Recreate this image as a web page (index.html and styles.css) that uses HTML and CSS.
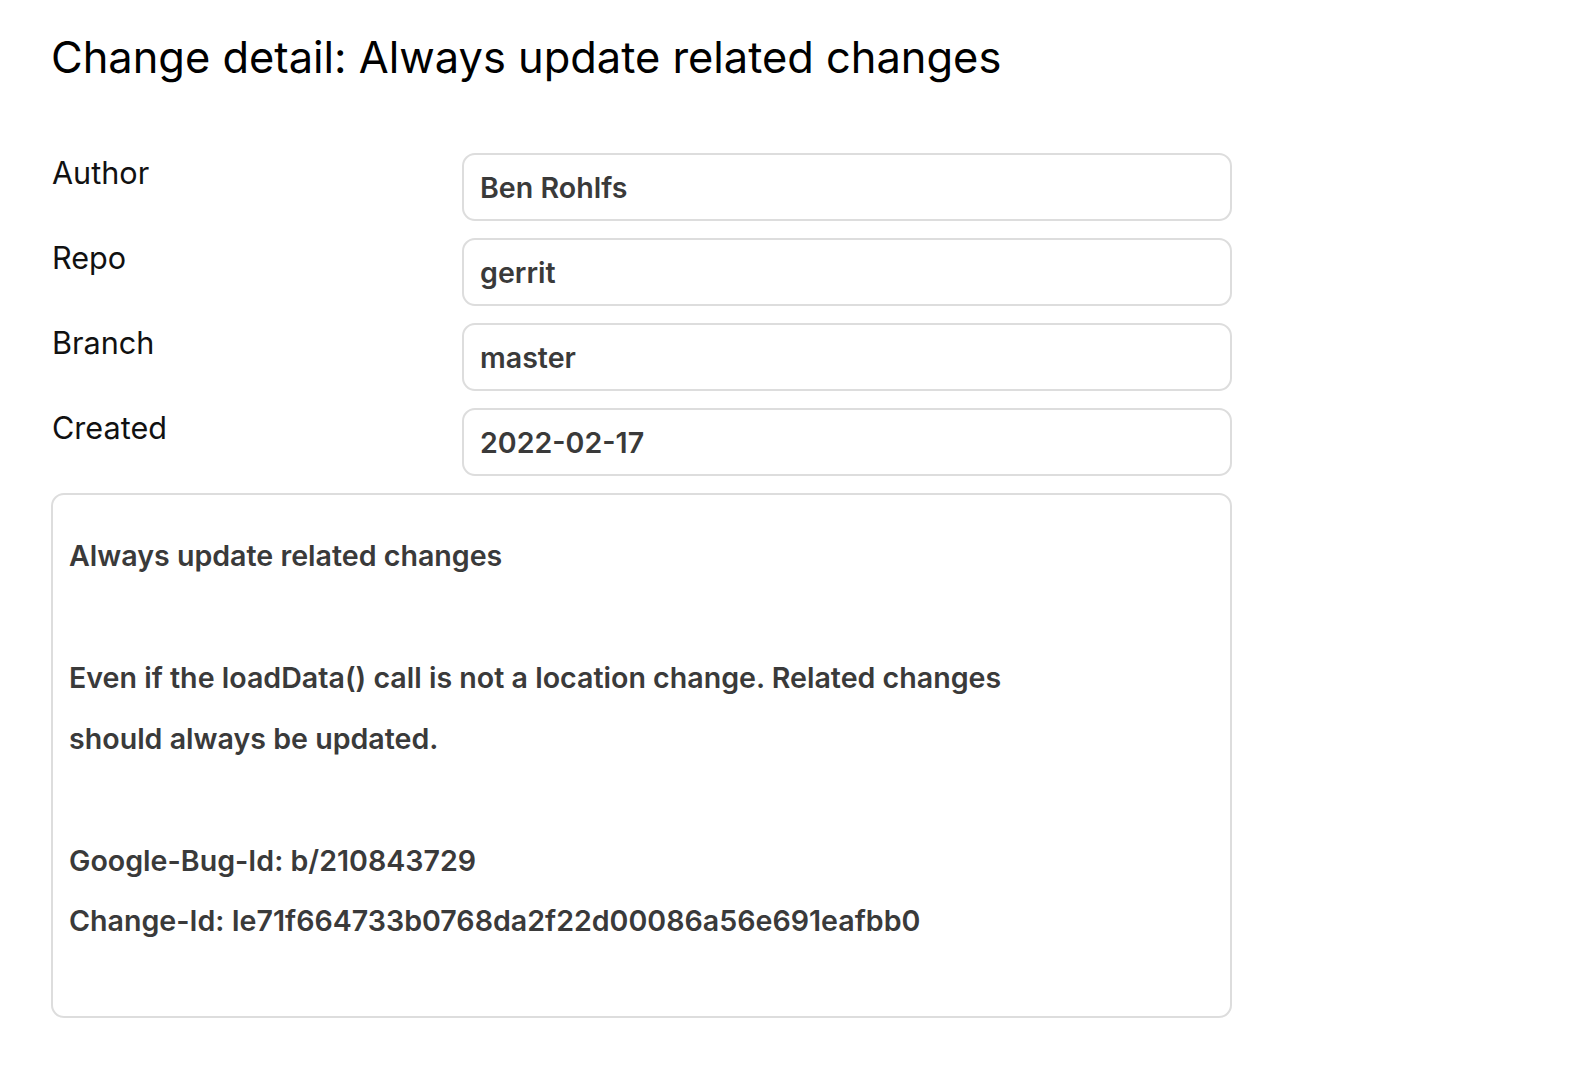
FILE: index.html
```html
<!DOCTYPE html>
<html lang="en">
<head>
<meta charset="utf-8">
<title>Change detail</title>
<link rel="stylesheet" href="styles.css">
</head>
<body>
<main class="page">
  <h1 class="title">Change detail: Always update related changes</h1>
  <div class="form">
    <div class="label">Author</div>
    <div class="field">Ben Rohlfs</div>
    <div class="label">Repo</div>
    <div class="field">gerrit</div>
    <div class="label">Branch</div>
    <div class="field">master</div>
    <div class="label">Created</div>
    <div class="field">2022-02-17</div>
    <div class="message">Always update related changes

Even if the loadData() call is not a location change. Related changes
should always be updated.

Google-Bug-Id: b/210843729
Change-Id: Ie71f664733b0768da2f22d00086a56e691eafbb0</div>
  </div>
</main>
</body>
</html>
```

FILE: styles.css
```css
html, body {
  margin: 0;
  padding: 0;
  background: #ffffff;
}

.page {
  padding: 0 51px;
  font-family: Inter, "Noto Sans", sans-serif;
}

.title {
  margin: 0;
  padding-top: 31px;
  font-size: 43.4px;
  line-height: 52px;
  font-weight: 400;
  color: #000000;
}

.form {
  margin-top: 70px;
  display: grid;
  grid-template-columns: 411px 770px;
  row-gap: 17px;
  width: 1181px;
}

.label {
  padding-top: 2px;
  padding-left: 1px;
  font-size: 30.6px;
  line-height: 35px;
  color: #111111;
}

.field {
  box-sizing: border-box;
  height: 68px;
  border: 2px solid #dddddd;
  border-radius: 13px;
  padding: 0 16px;
  display: flex;
  align-items: center;
  font-size: 28.6px;
  font-weight: 600;
  color: #3a3a3a;
}

.message {
  grid-column: 1 / -1;
  box-sizing: border-box;
  border: 2px solid #dddddd;
  border-radius: 13px;
  padding: 31px 16px 64px;
  white-space: pre-wrap;
  font-size: 28.6px;
  line-height: 60.9px;
  font-weight: 600;
  color: #3a3a3a;
}
```
